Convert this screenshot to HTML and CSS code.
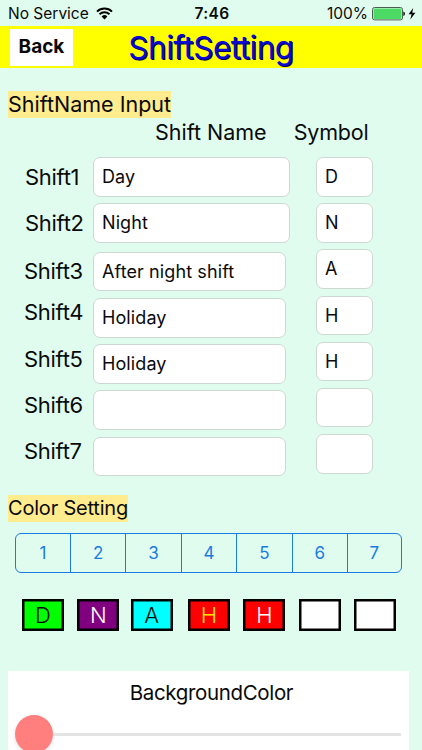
FILE: index.html
```html
<!DOCTYPE html>
<html lang="en">
  <head>
    <meta charset="UTF-8" />
    <meta name="viewport" content="width=device-width, initial-scale=1.0" />
    <title>ShiftSetting</title>
    <link rel="stylesheet" href="styles.css">
  </head>
  <body>
    <div class="status-bar">
      <div class="carrier">
        <span>No Service</span>
        <svg class="wifi" width="17" height="13" viewBox="0 0 17 13">
          <path d="M1 4.6 A10.8 10.8 0 0 1 16 4.6" />
          <path d="M3.5 7.2 A7.2 7.2 0 0 1 13.5 7.2" />
          <path class="wifi-dot" d="M8.5 12.4 L5.6 9.5 A4.2 4.2 0 0 1 11.4 9.5 Z" />
        </svg>
      </div>
      <strong class="time">7:46</strong>
      <div class="power">
        <span>100%</span>
        <svg width="44" height="14" viewBox="0 0 44 14">
          <rect x="0.5" y="0.5" width="30" height="12.4" rx="2" fill="none" stroke="#4b5e52" />
          <rect x="1.5" y="1.5" width="28" height="10.4" rx="1" fill="#4cd964" />
          <path d="M31.3 4.5 Q33 5 33 6.7 Q33 8.4 31.3 8.9 Z" fill="#111" />
          <path d="M41.2 1 L36.6 7.3 H39.6 L38.3 12.4 L43.4 5.8 H40.2 Z" fill="#000" />
        </svg>
      </div>
    </div>

    <header class="nav">
      <div class="back">Back</div>
      <h1>ShiftSetting</h1>
    </header>

    <main>
      <h2 class="mark mark-name">ShiftName Input</h2>

      <div class="columns-head">
        <span class="head-name">Shift Name</span>
        <span class="head-symbol">Symbol</span>
      </div>

      <section class="shifts">
        <div class="labels">
          <span>Shift1</span>
          <span>Shift2</span>
          <span class="wide label-3">Shift3</span>
          <span class="wide label-4">Shift4</span>
          <span class="wide">Shift5</span>
          <span class="wide">Shift6</span>
          <span class="wide">Shift7</span>
        </div>
        <div class="names">
          <div class="field long">Day</div>
          <div class="field long">Night</div>
          <div class="field third">After night shift</div>
          <div class="field">Holiday</div>
          <div class="field">Holiday</div>
          <div class="field"></div>
          <div class="field"></div>
        </div>
        <div class="symbols">
          <div class="field">D</div>
          <div class="field">N</div>
          <div class="field">A</div>
          <div class="field">H</div>
          <div class="field">H</div>
          <div class="field"></div>
          <div class="field"></div>
        </div>
      </section>

      <h2 class="mark mark-color">Color Setting</h2>

      <div class="segments">
        <span>1</span>
        <span>2</span>
        <span>3</span>
        <span>4</span>
        <span>5</span>
        <span>6</span>
        <span>7</span>
      </div>

      <div class="swatches">
        <span class="swatch day">D</span>
        <span class="swatch night">N</span>
        <span class="swatch after">A</span>
        <span class="swatch holiday">H</span>
        <span class="swatch holiday-2">H</span>
        <span class="swatch"></span>
        <span class="swatch"></span>
      </div>

      <section class="panel">
        <h3>BackgroundColor</h3>
        <div class="slider">
          <div class="knob"></div>
          <div class="track"></div>
        </div>
      </section>
    </main>
  </body>
</html>
```

FILE: styles.css
```css
* {
  box-sizing: border-box;
}

body {
  margin: 0;
  height: 750px;
  overflow: hidden;
  background-color: #e0fcee;
  color: #0a0a0a;
  font-family: Inter, "Liberation Sans", sans-serif;
  white-space: nowrap;
}

h1,
h2,
h3 {
  margin: 0;
  font-weight: 400;
}

.status-bar {
  display: grid;
  grid-template-columns: 1fr auto 1fr;
  align-items: center;
  height: 26px;
  padding: 1px 6px 0 8px;
  font-size: 15.5px;
}

.carrier,
.power {
  display: flex;
  align-items: center;
}

.carrier {
  gap: 7px;
}

.power {
  justify-content: flex-end;
  gap: 4px;
}

.wifi {
  fill: none;
  stroke: #000;
  stroke-width: 1.9;
}

.wifi .wifi-dot {
  fill: #000;
  stroke: none;
}

.time {
  font-weight: 600;
  letter-spacing: 0.3px;
}

.nav {
  display: grid;
  grid-template-columns: 63px 1fr 63px;
  height: 42px;
  padding: 3px 10px 4px;
  background-color: #ff0;
}

.back {
  background-color: #fff;
  font-size: 19px;
  font-weight: 700;
  line-height: 35px;
  text-align: center;
}

.nav h1 {
  color: #0a0ad2;
  font-size: 31.5px;
  letter-spacing: -0.5px;
  line-height: 37px;
  text-align: center;
  text-shadow: 1px 1px 0 #000050;
}

.mark {
  width: fit-content;
  margin-left: 8px;
  background-color: #ffec8f;
  line-height: 27px;
}

.mark-name {
  margin-top: 23px;
  font-size: 21.5px;
}

.mark-color {
  margin-top: 18px;
  font-size: 20px;
  letter-spacing: -0.2px;
}

.columns-head {
  display: flex;
  gap: 27px;
  height: 39px;
  padding-left: 155px;
  font-size: 21.5px;
  line-height: 29px;
}

.head-symbol {
  letter-spacing: -0.2px;
}

.shifts {
  display: flex;
  height: 320px;
}

.labels {
  width: 93px;
  padding-left: 25px;
  font-size: 22px;
  letter-spacing: -0.3px;
}

.labels span {
  display: block;
  height: 46.3px;
  line-height: 40px;
}

.labels .wide {
  margin-left: -1px;
}

.labels .label-3 {
  margin-top: 1.5px;
}

.labels .label-4 {
  margin-top: -5px;
}

.names,
.symbols {
  display: flex;
  flex-direction: column;
  gap: 6.7px;
}

.names {
  width: 223px;
}

.symbols {
  width: 56.5px;
}

.field {
  height: 39.5px;
  padding-left: 8px;
  border: 1px solid #cdd8d2;
  border-radius: 7px;
  background-color: #fff;
  font-size: 18px;
  letter-spacing: 0.1px;
  line-height: 38px;
}

.names .field {
  width: 192.5px;
}

.names .long {
  width: 196.5px;
}

.names .third {
  margin-top: 2.5px;
}

.segments {
  display: grid;
  grid-template-columns: 54px repeat(5, 55.4px) 1fr;
  width: 386.5px;
  height: 40px;
  margin: 11px 0 0 15px;
  border: 1px solid #1a7be0;
  border-radius: 6px;
  color: #1a7be0;
  font-size: 17px;
  line-height: 38px;
  text-align: center;
}

.segments span + span {
  border-left: 1px solid #1a7be0;
}

.swatches {
  display: flex;
  justify-content: space-between;
  width: 374px;
  margin: 26px 0 0 22px;
}

.swatch {
  width: 42px;
  height: 32px;
  background-color: #fff;
  box-shadow: inset 0 0 0 2.5px #000;
  font-size: 22px;
  font-weight: 300;
  line-height: 32px;
  text-align: center;
}

.day {
  background-color: #0f0;
}

.night {
  background-color: #800080;
  color: #fff;
}

.after {
  margin: 0 2px 0 -2px;
  background-color: #0ff;
}

.holiday {
  background-color: #f00;
  color: #ffe600;
}

.holiday-2 {
  background-color: #f00;
  color: #fff;
}

.panel {
  height: 79px;
  margin: 40px 13px 0 8px;
  background-color: #fff;
}

.panel h3 {
  padding-top: 8px;
  padding-left: 6px;
  font-size: 20.5px;
  letter-spacing: -0.35px;
  line-height: 28px;
  text-align: center;
}

.slider {
  display: flex;
  align-items: center;
  margin: 8px 8px 0 7px;
}

.knob {
  width: 38px;
  height: 38px;
  border-radius: 50%;
  background-color: #ff7f7f;
  box-shadow: 0 2px 4px rgba(0, 0, 0, 0.12);
}

.track {
  flex: 1;
  height: 3px;
  background-color: #e4e4e4;
}
```
